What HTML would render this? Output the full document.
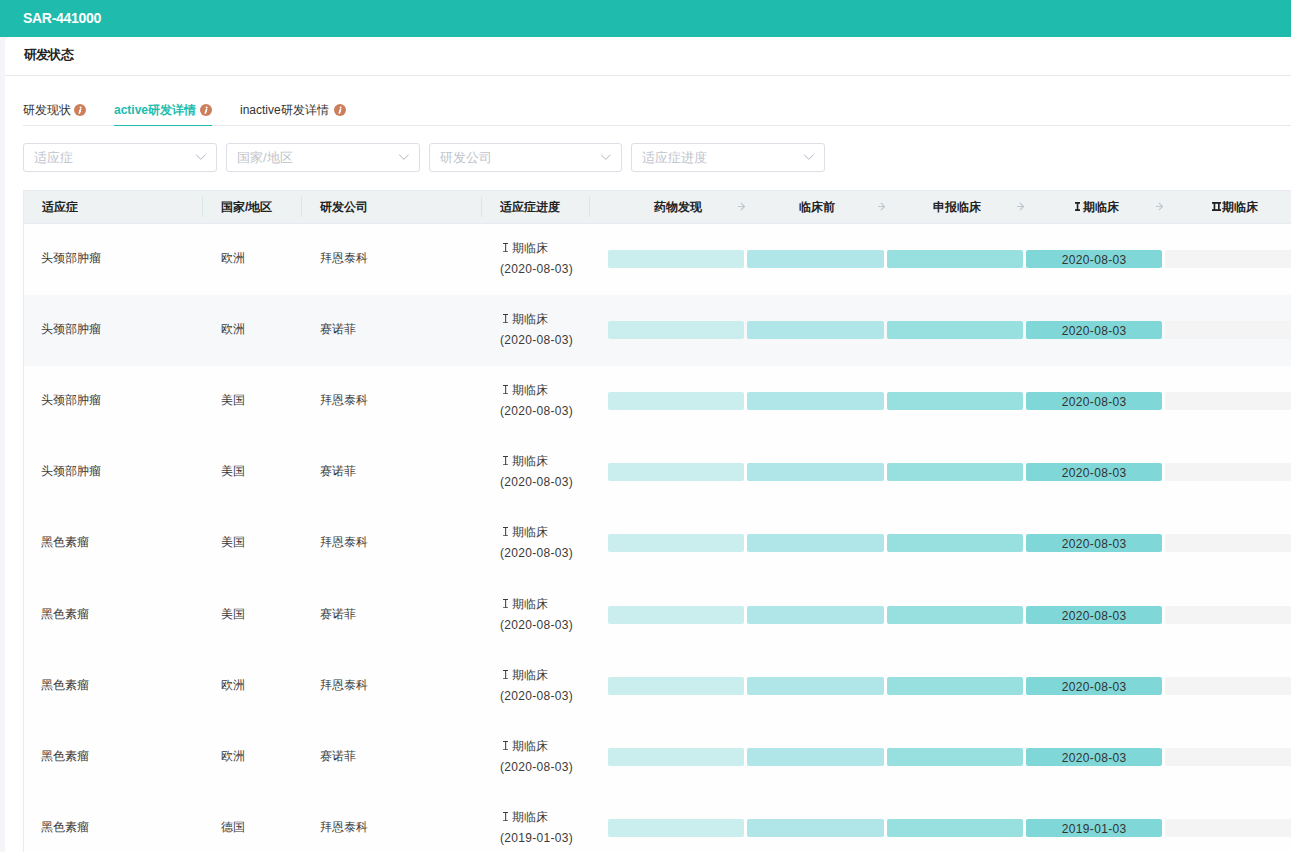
<!DOCTYPE html>
<html><head><meta charset="utf-8"><style>
*{box-sizing:border-box;margin:0;padding:0}
html,body{width:1291px;height:852px;overflow:hidden;background:#f4f5f8;font-family:"Liberation Sans",sans-serif;}
.abs{position:absolute}
#top{position:absolute;left:0;top:0;width:1291px;height:37px;background:#1fbcae}
#top .t{position:absolute;left:23px;top:9px;color:#fff;font-weight:bold;font-size:14px;line-height:18px;letter-spacing:-0.3px}
#card{position:absolute;left:5px;top:37px;width:1300px;height:830px;background:#fff;border-top-left-radius:6px}
.ttl{position:absolute;left:23.5px;top:46px;letter-spacing:-0.6px;font-size:13px;font-weight:bold;color:#222;line-height:18px}
.hline{position:absolute;left:5px;top:75px;width:1300px;height:1px;background:#e8e8e8}
.tabs{position:absolute;left:23px;top:125px;width:1280px;height:1px;background:#e6e8ee}
.tab{position:absolute;top:101px;font-size:12px;line-height:18px;color:#333}
.tab.act{color:#20bcad;font-weight:bold}
.info{position:absolute;top:104px;width:12px;height:12px}
.info svg{display:block}
.uline{position:absolute;left:114px;top:125px;width:98px;height:1px;background:#20bcad}
.sel{position:absolute;top:143px;height:29px;border:1px solid #dcdfe6;border-radius:3px;background:#fff}
.sel span{position:absolute;left:10px;top:4.8px;font-size:13px;line-height:17px;color:#c0c4cc}
.sel svg{position:absolute;right:10.5px;top:9.5px}
.thead{position:absolute;left:23px;top:190px;width:1280px;height:34px;background:#eef2f3;border-top:1px solid #e8ebf1;border-bottom:1px solid #e8ebf1}
.th{position:absolute;top:199px;font-size:12px;font-weight:bold;color:#222;line-height:16px;white-space:nowrap}
.div{position:absolute;top:197px;width:1px;height:20px;background:#d6e7e4}
.lborder{position:absolute;left:23px;top:190px;width:1px;height:680px;background:#e8ebf3}
.row{position:absolute;left:24px;width:1280px;height:71px}
.td{position:absolute;font-size:12px;color:#3a3a3a;line-height:16px;white-space:nowrap}
.pg{line-height:21px;letter-spacing:0.3px}
.bar{position:absolute;height:18px;border-radius:2px;font-size:12px;line-height:18px;color:#333;text-align:center}
.b1{background:#caeded}.b2{background:#b0e6e7}.b3{background:#98dfdf}.b4{background:#7fd7d8}.b5{background:#f4f4f4}
.dt{letter-spacing:0.35px;position:relative;top:1px;left:0.2px}
.rn{display:inline-block;vertical-align:top}
</style></head><body>
<div id="top"><div class="t">SAR-441000</div></div>
<div id="card"></div>
<div class="ttl">研发状态</div>
<div class="hline"></div>
<div class="tabs"></div>
<div class="tab" style="left:23px">研发现状</div><div class="info" style="left:74px"><svg width="12" height="12" viewBox="0 0 12 12"><circle cx="6" cy="6" r="6" fill="#cd7f5c"/><circle cx="6.6" cy="3.4" r="1" fill="#fff"/><path d="M6.7 5.3L5.6 7.2L6.3 7.4L5.2 9.2" fill="none" stroke="#fff" stroke-width="1.5" stroke-linecap="round" stroke-linejoin="round"/></svg></div>
<div class="tab act" style="left:114px">active研发详情</div><div class="info" style="left:200px"><svg width="12" height="12" viewBox="0 0 12 12"><circle cx="6" cy="6" r="6" fill="#cd7f5c"/><circle cx="6.6" cy="3.4" r="1" fill="#fff"/><path d="M6.7 5.3L5.6 7.2L6.3 7.4L5.2 9.2" fill="none" stroke="#fff" stroke-width="1.5" stroke-linecap="round" stroke-linejoin="round"/></svg></div>
<div class="tab" style="left:240px">inactive研发详情</div><div class="info" style="left:334px"><svg width="12" height="12" viewBox="0 0 12 12"><circle cx="6" cy="6" r="6" fill="#cd7f5c"/><circle cx="6.6" cy="3.4" r="1" fill="#fff"/><path d="M6.7 5.3L5.6 7.2L6.3 7.4L5.2 9.2" fill="none" stroke="#fff" stroke-width="1.5" stroke-linecap="round" stroke-linejoin="round"/></svg></div>
<div class="uline"></div>
<div class="sel" style="left:23px;width:194px"><span>适应症</span><svg width="11" height="7" viewBox="0 0 11 7"><path d="M1.2 0.8L5.85 5.3L10.5 0.8" fill="none" stroke="#b0b4be" stroke-width="1"/></svg></div>
<div class="sel" style="left:226px;width:194px"><span>国家/地区</span><svg width="11" height="7" viewBox="0 0 11 7"><path d="M1.2 0.8L5.85 5.3L10.5 0.8" fill="none" stroke="#b0b4be" stroke-width="1"/></svg></div>
<div class="sel" style="left:429px;width:193px"><span>研发公司</span><svg width="11" height="7" viewBox="0 0 11 7"><path d="M1.2 0.8L5.85 5.3L10.5 0.8" fill="none" stroke="#b0b4be" stroke-width="1"/></svg></div>
<div class="sel" style="left:631px;width:194px"><span>适应症进度</span><svg width="11" height="7" viewBox="0 0 11 7"><path d="M1.2 0.8L5.85 5.3L10.5 0.8" fill="none" stroke="#b0b4be" stroke-width="1"/></svg></div>
<div class="thead"></div>
<div class="th" style="left:42px">适应症</div>
<div class="th" style="left:221px">国家/地区</div>
<div class="th" style="left:320px">研发公司</div>
<div class="th" style="left:500px">适应症进度</div>
<div class="div" style="left:202px"></div>
<div class="div" style="left:301px"></div>
<div class="div" style="left:481px"></div>
<div class="div" style="left:589px"></div>
<div class="th" style="left:653.5px">药物发现</div>
<svg class="abs" style="left:736.5px;top:202.2px" width="9" height="9" viewBox="0 0 9 9"><path d="M1 4.5H7.5M3.9 0.9L7.5 4.5L3.9 8.1" fill="none" stroke="#bfc6cd" stroke-width="1.2"/></svg>
<div class="th" style="left:799px">临床前</div>
<svg class="abs" style="left:876.5px;top:202.2px" width="9" height="9" viewBox="0 0 9 9"><path d="M1 4.5H7.5M3.9 0.9L7.5 4.5L3.9 8.1" fill="none" stroke="#bfc6cd" stroke-width="1.2"/></svg>
<div class="th" style="left:933px">申报临床</div>
<svg class="abs" style="left:1015.5px;top:202.2px" width="9" height="9" viewBox="0 0 9 9"><path d="M1 4.5H7.5M3.9 0.9L7.5 4.5L3.9 8.1" fill="none" stroke="#bfc6cd" stroke-width="1.2"/></svg>
<div class="th" style="left:1074.7px"><svg class="rn" style="margin:2.9px 3.4px 0 0" width="5" height="9" viewBox="0 0 5 9"><rect x="0" y="0" width="5" height="1.8" fill="#222"/><rect x="0" y="7.2" width="5" height="1.8" fill="#222"/><rect x="1.75" y="0" width="1.6" height="9" fill="#222"/></svg>期临床</div>
<svg class="abs" style="left:1154.5px;top:202.2px" width="9" height="9" viewBox="0 0 9 9"><path d="M1 4.5H7.5M3.9 0.9L7.5 4.5L3.9 8.1" fill="none" stroke="#bfc6cd" stroke-width="1.2"/></svg>
<div class="th" style="left:1211.6px"><svg class="rn" style="margin:2.9px 1.4px 0 0" width="9.3" height="9" viewBox="0 0 9.3 9"><rect x="0" y="0" width="9.3" height="1.8" fill="#222"/><rect x="0" y="7.2" width="9.3" height="1.8" fill="#222"/><rect x="1.6" y="0" width="1.7" height="9" fill="#222"/><rect x="6" y="0" width="1.7" height="9" fill="#222"/></svg>期临床</div>
<div class="lborder"></div>
<div class="row" style="top:224px;background:#fefefe"></div>
<div class="td" style="left:41px;top:250.0px">头颈部肿瘤</div>
<div class="td" style="left:221px;top:250.0px">欧洲</div>
<div class="td" style="left:320px;top:250.0px">拜恩泰科</div>
<div class="td pg" style="left:500px;top:237.5px"><svg class="rn" style="margin:5.6px 3.3px 0 3.2px" width="5.3" height="9.3" viewBox="0 0 5.3 9.3"><rect x="0" y="0" width="5.3" height="1" fill="#3a3a3a"/><rect x="0" y="8.3" width="5.3" height="1" fill="#3a3a3a"/><rect x="2.15" y="0" width="1" height="9.3" fill="#3a3a3a"/></svg>期临床<br>(2020-08-03)</div>
<div class="bar b1" style="left:608px;top:250px;width:136px"></div>
<div class="bar b2" style="left:747px;top:250px;width:137px"></div>
<div class="bar b3" style="left:887px;top:250px;width:136px"></div>
<div class="bar b4" style="left:1026px;top:250px;width:136px"><span class="dt">2020-08-03</span></div>
<div class="bar b5" style="left:1165px;top:250px;width:140px"></div>
<div class="row" style="top:295px;background:#f7f8fa"></div>
<div class="td" style="left:41px;top:321.0px">头颈部肿瘤</div>
<div class="td" style="left:221px;top:321.0px">欧洲</div>
<div class="td" style="left:320px;top:321.0px">赛诺菲</div>
<div class="td pg" style="left:500px;top:308.5px"><svg class="rn" style="margin:5.6px 3.3px 0 3.2px" width="5.3" height="9.3" viewBox="0 0 5.3 9.3"><rect x="0" y="0" width="5.3" height="1" fill="#3a3a3a"/><rect x="0" y="8.3" width="5.3" height="1" fill="#3a3a3a"/><rect x="2.15" y="0" width="1" height="9.3" fill="#3a3a3a"/></svg>期临床<br>(2020-08-03)</div>
<div class="bar b1" style="left:608px;top:321px;width:136px"></div>
<div class="bar b2" style="left:747px;top:321px;width:137px"></div>
<div class="bar b3" style="left:887px;top:321px;width:136px"></div>
<div class="bar b4" style="left:1026px;top:321px;width:136px"><span class="dt">2020-08-03</span></div>
<div class="bar b5" style="left:1165px;top:321px;width:140px"></div>
<div class="row" style="top:366px;background:#fefefe"></div>
<div class="td" style="left:41px;top:392.0px">头颈部肿瘤</div>
<div class="td" style="left:221px;top:392.0px">美国</div>
<div class="td" style="left:320px;top:392.0px">拜恩泰科</div>
<div class="td pg" style="left:500px;top:379.5px"><svg class="rn" style="margin:5.6px 3.3px 0 3.2px" width="5.3" height="9.3" viewBox="0 0 5.3 9.3"><rect x="0" y="0" width="5.3" height="1" fill="#3a3a3a"/><rect x="0" y="8.3" width="5.3" height="1" fill="#3a3a3a"/><rect x="2.15" y="0" width="1" height="9.3" fill="#3a3a3a"/></svg>期临床<br>(2020-08-03)</div>
<div class="bar b1" style="left:608px;top:392px;width:136px"></div>
<div class="bar b2" style="left:747px;top:392px;width:137px"></div>
<div class="bar b3" style="left:887px;top:392px;width:136px"></div>
<div class="bar b4" style="left:1026px;top:392px;width:136px"><span class="dt">2020-08-03</span></div>
<div class="bar b5" style="left:1165px;top:392px;width:140px"></div>
<div class="row" style="top:437px;background:#fefefe"></div>
<div class="td" style="left:41px;top:463.0px">头颈部肿瘤</div>
<div class="td" style="left:221px;top:463.0px">美国</div>
<div class="td" style="left:320px;top:463.0px">赛诺菲</div>
<div class="td pg" style="left:500px;top:450.5px"><svg class="rn" style="margin:5.6px 3.3px 0 3.2px" width="5.3" height="9.3" viewBox="0 0 5.3 9.3"><rect x="0" y="0" width="5.3" height="1" fill="#3a3a3a"/><rect x="0" y="8.3" width="5.3" height="1" fill="#3a3a3a"/><rect x="2.15" y="0" width="1" height="9.3" fill="#3a3a3a"/></svg>期临床<br>(2020-08-03)</div>
<div class="bar b1" style="left:608px;top:463px;width:136px"></div>
<div class="bar b2" style="left:747px;top:463px;width:137px"></div>
<div class="bar b3" style="left:887px;top:463px;width:136px"></div>
<div class="bar b4" style="left:1026px;top:463px;width:136px"><span class="dt">2020-08-03</span></div>
<div class="bar b5" style="left:1165px;top:463px;width:140px"></div>
<div class="row" style="top:508px;background:#fefefe"></div>
<div class="td" style="left:41px;top:534.0px">黑色素瘤</div>
<div class="td" style="left:221px;top:534.0px">美国</div>
<div class="td" style="left:320px;top:534.0px">拜恩泰科</div>
<div class="td pg" style="left:500px;top:521.5px"><svg class="rn" style="margin:5.6px 3.3px 0 3.2px" width="5.3" height="9.3" viewBox="0 0 5.3 9.3"><rect x="0" y="0" width="5.3" height="1" fill="#3a3a3a"/><rect x="0" y="8.3" width="5.3" height="1" fill="#3a3a3a"/><rect x="2.15" y="0" width="1" height="9.3" fill="#3a3a3a"/></svg>期临床<br>(2020-08-03)</div>
<div class="bar b1" style="left:608px;top:534px;width:136px"></div>
<div class="bar b2" style="left:747px;top:534px;width:137px"></div>
<div class="bar b3" style="left:887px;top:534px;width:136px"></div>
<div class="bar b4" style="left:1026px;top:534px;width:136px"><span class="dt">2020-08-03</span></div>
<div class="bar b5" style="left:1165px;top:534px;width:140px"></div>
<div class="row" style="top:580px;background:#fefefe"></div>
<div class="td" style="left:41px;top:606.0px">黑色素瘤</div>
<div class="td" style="left:221px;top:606.0px">美国</div>
<div class="td" style="left:320px;top:606.0px">赛诺菲</div>
<div class="td pg" style="left:500px;top:593.5px"><svg class="rn" style="margin:5.6px 3.3px 0 3.2px" width="5.3" height="9.3" viewBox="0 0 5.3 9.3"><rect x="0" y="0" width="5.3" height="1" fill="#3a3a3a"/><rect x="0" y="8.3" width="5.3" height="1" fill="#3a3a3a"/><rect x="2.15" y="0" width="1" height="9.3" fill="#3a3a3a"/></svg>期临床<br>(2020-08-03)</div>
<div class="bar b1" style="left:608px;top:606px;width:136px"></div>
<div class="bar b2" style="left:747px;top:606px;width:137px"></div>
<div class="bar b3" style="left:887px;top:606px;width:136px"></div>
<div class="bar b4" style="left:1026px;top:606px;width:136px"><span class="dt">2020-08-03</span></div>
<div class="bar b5" style="left:1165px;top:606px;width:140px"></div>
<div class="row" style="top:651px;background:#fefefe"></div>
<div class="td" style="left:41px;top:677.0px">黑色素瘤</div>
<div class="td" style="left:221px;top:677.0px">欧洲</div>
<div class="td" style="left:320px;top:677.0px">拜恩泰科</div>
<div class="td pg" style="left:500px;top:664.5px"><svg class="rn" style="margin:5.6px 3.3px 0 3.2px" width="5.3" height="9.3" viewBox="0 0 5.3 9.3"><rect x="0" y="0" width="5.3" height="1" fill="#3a3a3a"/><rect x="0" y="8.3" width="5.3" height="1" fill="#3a3a3a"/><rect x="2.15" y="0" width="1" height="9.3" fill="#3a3a3a"/></svg>期临床<br>(2020-08-03)</div>
<div class="bar b1" style="left:608px;top:677px;width:136px"></div>
<div class="bar b2" style="left:747px;top:677px;width:137px"></div>
<div class="bar b3" style="left:887px;top:677px;width:136px"></div>
<div class="bar b4" style="left:1026px;top:677px;width:136px"><span class="dt">2020-08-03</span></div>
<div class="bar b5" style="left:1165px;top:677px;width:140px"></div>
<div class="row" style="top:722px;background:#fefefe"></div>
<div class="td" style="left:41px;top:748.0px">黑色素瘤</div>
<div class="td" style="left:221px;top:748.0px">欧洲</div>
<div class="td" style="left:320px;top:748.0px">赛诺菲</div>
<div class="td pg" style="left:500px;top:735.5px"><svg class="rn" style="margin:5.6px 3.3px 0 3.2px" width="5.3" height="9.3" viewBox="0 0 5.3 9.3"><rect x="0" y="0" width="5.3" height="1" fill="#3a3a3a"/><rect x="0" y="8.3" width="5.3" height="1" fill="#3a3a3a"/><rect x="2.15" y="0" width="1" height="9.3" fill="#3a3a3a"/></svg>期临床<br>(2020-08-03)</div>
<div class="bar b1" style="left:608px;top:748px;width:136px"></div>
<div class="bar b2" style="left:747px;top:748px;width:137px"></div>
<div class="bar b3" style="left:887px;top:748px;width:136px"></div>
<div class="bar b4" style="left:1026px;top:748px;width:136px"><span class="dt">2020-08-03</span></div>
<div class="bar b5" style="left:1165px;top:748px;width:140px"></div>
<div class="row" style="top:793px;background:#fefefe"></div>
<div class="td" style="left:41px;top:819.0px">黑色素瘤</div>
<div class="td" style="left:221px;top:819.0px">德国</div>
<div class="td" style="left:320px;top:819.0px">拜恩泰科</div>
<div class="td pg" style="left:500px;top:806.5px"><svg class="rn" style="margin:5.6px 3.3px 0 3.2px" width="5.3" height="9.3" viewBox="0 0 5.3 9.3"><rect x="0" y="0" width="5.3" height="1" fill="#3a3a3a"/><rect x="0" y="8.3" width="5.3" height="1" fill="#3a3a3a"/><rect x="2.15" y="0" width="1" height="9.3" fill="#3a3a3a"/></svg>期临床<br>(2019-01-03)</div>
<div class="bar b1" style="left:608px;top:819px;width:136px"></div>
<div class="bar b2" style="left:747px;top:819px;width:137px"></div>
<div class="bar b3" style="left:887px;top:819px;width:136px"></div>
<div class="bar b4" style="left:1026px;top:819px;width:136px"><span class="dt">2019-01-03</span></div>
<div class="bar b5" style="left:1165px;top:819px;width:140px"></div>
</body></html>
